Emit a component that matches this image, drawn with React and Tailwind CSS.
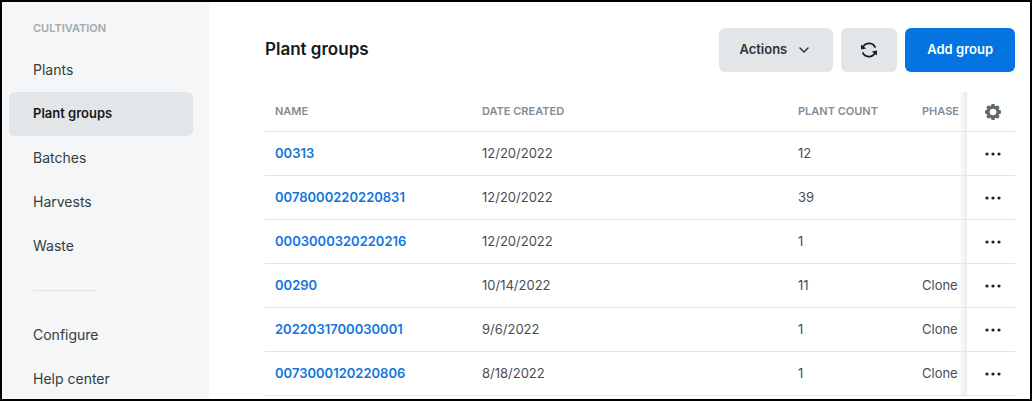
import React, { useState } from 'react';
import clsx from 'clsx';

const mainLinks = ['Plants', 'Plant groups', 'Batches', 'Harvests', 'Waste'];
const footerLinks = ['Configure', 'Help center'];

const groups = [
  { name: '00313', created: '12/20/2022', count: 12, phase: '' },
  { name: '0078000220220831', created: '12/20/2022', count: 39, phase: '' },
  { name: '0003000320220216', created: '12/20/2022', count: 1, phase: '' },
  { name: '00290', created: '10/14/2022', count: 11, phase: 'Clone' },
  { name: '2022031700030001', created: '9/6/2022', count: 1, phase: 'Clone' },
  { name: '0073000120220806', created: '8/18/2022', count: 1, phase: 'Clone' },
];

// Soft edge to the left of the pinned column
const pinned =
  "relative p-0 before:absolute before:inset-y-0 before:right-full before:w-2 before:bg-linear-to-r before:from-transparent before:to-black/8 before:content-['']";

const ChevronIcon = () => (
  <svg width="10" height="6" viewBox="0 0 10 6" fill="none" aria-hidden="true">
    <path d="M1 1l4 4 4-4" stroke="#2f3437" strokeWidth="1.5" strokeLinecap="round" strokeLinejoin="round" />
  </svg>
);

const RefreshIcon = () => (
  <svg width="16" height="16" viewBox="0 0 16 16" fill="none" aria-hidden="true">
    <path d="M2 5A6.9 6.9 0 0 1 14.4 5.6" stroke="#1b1e20" strokeWidth="1.7" />
    <path d="M14 11A6.9 6.9 0 0 1 1.6 10.4" stroke="#1b1e20" strokeWidth="1.7" />
    <path d="M0 2.4v5.2l5.2-1.2z" fill="#1b1e20" />
    <path d="M16 13.6V8.4l-5.2 1.2z" fill="#1b1e20" />
  </svg>
);

const GearIcon = () => (
  <svg width="16" height="16" viewBox="0 0 16 16" fill="none" aria-hidden="true">
    <g fill="#5f6b73">
      <path d="M6.6 0h2.8l1 3H5.6zM6.6 16h2.8l1-3H5.6z" />
      <path d="M6.6 0h2.8l1 3H5.6zM6.6 16h2.8l1-3H5.6z" transform="rotate(45 8 8)" />
      <path d="M6.6 0h2.8l1 3H5.6zM6.6 16h2.8l1-3H5.6z" transform="rotate(90 8 8)" />
      <path d="M6.6 0h2.8l1 3H5.6zM6.6 16h2.8l1-3H5.6z" transform="rotate(135 8 8)" />
      <circle cx="8" cy="8" r="6.2" />
    </g>
    <circle cx="8" cy="8" r="3.3" fill="#fff" />
  </svg>
);

const DotsIcon = () => (
  <svg width="16" height="4" viewBox="0 0 16 4" fill="#1b1e20" aria-hidden="true">
    <circle cx="2" cy="2" r="1.6" />
    <circle cx="8" cy="2" r="1.6" />
    <circle cx="14" cy="2" r="1.6" />
  </svg>
);

const NavLink = ({ label, active, onClick }) => (
  <a
    href="#"
    onClick={onClick}
    aria-current={active ? 'page' : undefined}
    className={clsx(
      'flex h-11 items-center rounded-md px-6',
      active ? 'bg-[#e2e6e9] text-[13px] font-semibold text-[#15191b]' : 'text-sm text-[#363c40]'
    )}
  >
    {label}
  </a>
);

const App = () => {
  const [current, setCurrent] = useState('Plant groups');

  return (
    <div className="flex h-screen overflow-hidden border-2 border-black bg-white font-['Inter',sans-serif]">
      <aside className="w-[207px] shrink-0 bg-[#f4f6f8] pr-4 pl-[7px]">
        <h2 className="px-6 pt-[18px] pb-3 text-[11px] leading-4 font-semibold text-[#a3a9ac]">CULTIVATION</h2>
        <nav>
          {mainLinks.map((label) => (
            <NavLink key={label} label={label} active={label === current} onClick={() => setCurrent(label)} />
          ))}
          <hr className="mx-6 my-[22px] w-16 border-[#e0e3e5]" />
          {footerLinks.map((label) => (
            <NavLink key={label} label={label} active={label === current} onClick={() => setCurrent(label)} />
          ))}
        </nav>
      </aside>

      <main className="min-w-0 flex-1 pt-[26px] pr-[15px] pl-14">
        <div className="flex items-center justify-between">
          <h1 className="text-[17px] font-semibold text-[#15191b]">Plant groups</h1>
          <div className="flex gap-2 text-[13px] font-semibold">
            <button className="flex h-11 items-center gap-3 rounded-md bg-[#e2e6e9] pr-6 pl-5 text-[#2f3437]">
              Actions
              <ChevronIcon />
            </button>
            <button aria-label="Refresh" className="flex h-11 w-14 items-center justify-center rounded-md bg-[#e2e6e9]">
              <RefreshIcon />
            </button>
            <button className="h-11 rounded-md bg-[#0374e0] px-[22px] text-white">Add group</button>
          </div>
        </div>

        <table className="mt-5 w-full table-fixed border-separate border-spacing-0 text-left [&_td]:border-b [&_td]:border-[#e3e5e6] [&_th]:border-b [&_th]:border-[#e3e5e6]">
          <colgroup>
            <col className="w-[207px]" />
            <col />
            <col className="w-[124px]" />
            <col className="w-[55px]" />
            <col className="w-12" />
          </colgroup>
          <thead>
            <tr className="h-10 text-[11px] whitespace-nowrap text-[#858c91]">
              <th className="pl-[10px] font-semibold">NAME</th>
              <th className="pl-[10px] font-semibold">DATE CREATED</th>
              <th className="pl-[10px] font-semibold">PLANT COUNT</th>
              <th className="pl-[10px] font-semibold">PHASE</th>
              <th className={pinned}>
                <button aria-label="Table settings" className="flex w-full justify-center pl-1">
                  <GearIcon />
                </button>
              </th>
            </tr>
          </thead>
          <tbody>
            {groups.map((g) => (
              <tr key={g.name} className="h-11 text-[13px] text-[#474e53]">
                <td className="pt-px pl-[10px]">
                  <a href="#" className="font-semibold text-[#1274e0]">
                    {g.name}
                  </a>
                </td>
                <td className="pt-px pl-[10px]">{g.created}</td>
                <td className="pt-px pl-[10px]">{g.count}</td>
                <td className="pt-px pl-[10px]">{g.phase}</td>
                <td className={pinned}>
                  <button aria-label={`More options for ${g.name}`} className="flex w-full justify-center pl-1">
                    <DotsIcon />
                  </button>
                </td>
              </tr>
            ))}
          </tbody>
        </table>
      </main>
    </div>
  );
};

export default App;
